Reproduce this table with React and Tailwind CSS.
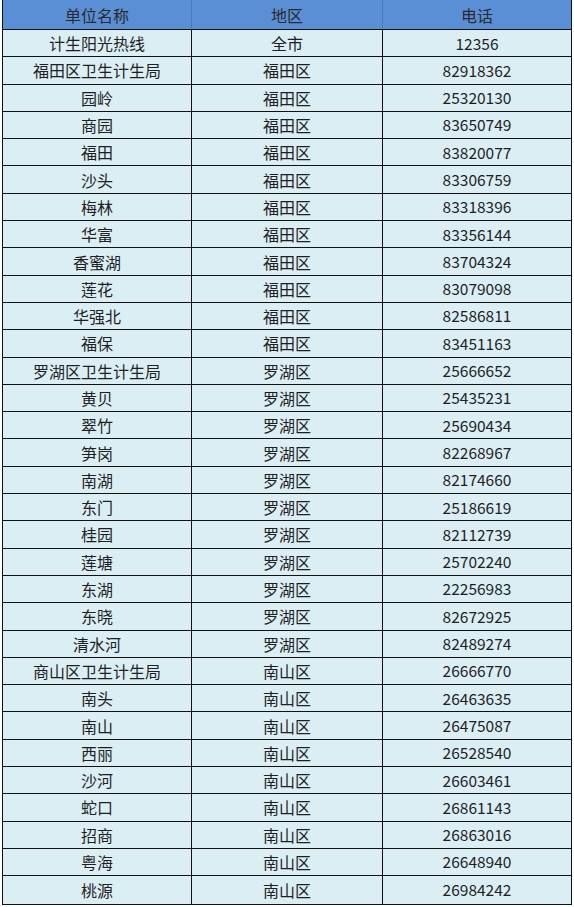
const rows = [
  ["计生阳光热线", "全市", "12356"],
  ["福田区卫生计生局", "福田区", "82918362"],
  ["园岭", "福田区", "25320130"],
  ["商园", "福田区", "83650749"],
  ["福田", "福田区", "83820077"],
  ["沙头", "福田区", "83306759"],
  ["梅林", "福田区", "83318396"],
  ["华富", "福田区", "83356144"],
  ["香蜜湖", "福田区", "83704324"],
  ["莲花", "福田区", "83079098"],
  ["华强北", "福田区", "82586811"],
  ["福保", "福田区", "83451163"],
  ["罗湖区卫生计生局", "罗湖区", "25666652"],
  ["黄贝", "罗湖区", "25435231"],
  ["翠竹", "罗湖区", "25690434"],
  ["笋岗", "罗湖区", "82268967"],
  ["南湖", "罗湖区", "82174660"],
  ["东门", "罗湖区", "25186619"],
  ["桂园", "罗湖区", "82112739"],
  ["莲塘", "罗湖区", "25702240"],
  ["东湖", "罗湖区", "22256983"],
  ["东晓", "罗湖区", "82672925"],
  ["清水河", "罗湖区", "82489274"],
  ["商山区卫生计生局", "南山区", "26666770"],
  ["南头", "南山区", "26463635"],
  ["南山", "南山区", "26475087"],
  ["西丽", "南山区", "26528540"],
  ["沙河", "南山区", "26603461"],
  ["蛇口", "南山区", "26861143"],
  ["招商", "南山区", "26863016"],
  ["粤海", "南山区", "26648940"],
  ["桃源", "南山区", "26984242"],
];

export default function App() {
  return (
    <div
      className="w-[574px] h-[907px] bg-white pl-[2px] text-[#1f1f1f]"
      style={{ fontFamily: '"Noto Sans CJK SC", "Noto Sans", sans-serif' }}
    >
      <div className="w-[570px] border-x-[1.5px] border-b-[1.5px] border-[#111]">
        {/* Header */}
        <div className="grid grid-cols-[189px_191px_1fr] h-[30px] bg-[#5a8fd6] border-b-[1.5px] border-[#111] text-[16px] text-[#2a2a2a]">
          <div className="flex items-center justify-center border-r border-[#4a78b8]">单位名称</div>
          <div className="flex items-center justify-center border-r border-[#4a78b8]">地区</div>
          <div className="flex items-center justify-center">电话</div>
        </div>

        {/* Rows */}
        {rows.map((r, i) => (
          <div
            key={i}
            className={
              "grid grid-cols-[189px_191px_1fr] h-[27.3px] bg-[#dbeef4] text-[16px] " +
              (i < rows.length - 1 ? "border-b-[1.5px] border-[#111]" : "")
            }
          >
            <div className="flex items-center justify-center border-r-[1.5px] border-[#111]">{r[0]}</div>
            <div className="flex items-center justify-center border-r-[1.5px] border-[#111]">{r[1]}</div>
            <div className="flex items-center justify-center text-[15.5px]">{r[2]}</div>
          </div>
        ))}
      </div>
    </div>
  );
}
